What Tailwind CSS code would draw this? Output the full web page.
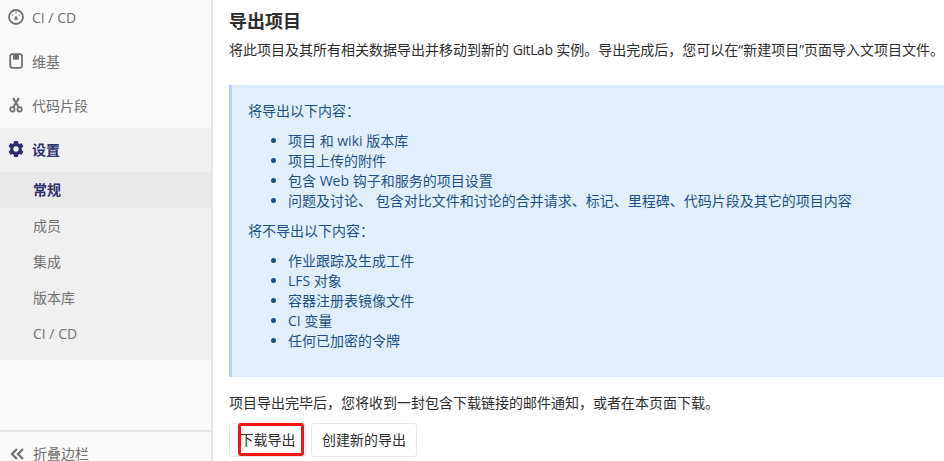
<!DOCTYPE html>
<html lang="zh">
<head>
<meta charset="UTF-8">
<title>导出项目</title>
<script src="https://cdn.jsdelivr.net/npm/@tailwindcss/browser@4"></script>
</head>
<body class="w-[944px] h-[461px] overflow-hidden bg-white flex font-['Open_Sans','Noto_Sans_CJK_SC',sans-serif] text-[14px]">

<!-- sidebar -->
<aside class="w-[213px] h-[461px] shrink-0 bg-[#fafafa] border-r-2 border-[#e5e5e5] flex flex-col text-[#707070]">
  <div class="h-[128px] flex flex-col">
    <a class="h-[36px] pb-[2px] flex items-center pl-[8px] gap-[8px]">
      <svg width="16" height="16" viewBox="0 0 16 16" fill="none" class="shrink-0"><circle cx="8" cy="8" r="7" stroke="#707070" stroke-width="1.800"/><path d="M8 6.500c1 1.300 1.600 2.100 1.600 3a1.600 1.600 0 0 1-3.200 0c0-.9.600-1.700 1.600-3z" fill="#707070"/><circle cx="8" cy="3.800" r=".8" fill="#707070"/><circle cx="4.600" cy="6" r=".8" fill="#707070"/><circle cx="11.400" cy="6" r=".8" fill="#707070"/></svg>
      <span>CI / CD</span>
    </a>
    <a class="h-[44px] pb-[2px] mt-[4px] flex items-center pl-[8px] gap-[8px]">
      <svg width="16" height="16" viewBox="0 0 16 16" fill="none" class="shrink-0"><rect x="2.200" y="1.200" width="11.800" height="13.600" rx="2.200" stroke="#707070" stroke-width="1.800"/><path d="M5 1.500h6v4.200a1 1 0 0 1-1 1H6a1 1 0 0 1-1-1z" fill="#707070"/></svg>
      <span>维基</span>
    </a>
    <a class="h-[44px] pb-[2px] flex items-center pl-[8px] gap-[8px]">
      <svg width="16" height="16" viewBox="0 0 16 16" fill="none" class="shrink-0"><path d="M5 1l5.600 9M11 1L5.400 10" stroke="#707070" stroke-width="2"/><circle cx="4.400" cy="12.400" r="2.200" stroke="#707070" stroke-width="1.700"/><circle cx="11.600" cy="12.400" r="2.200" stroke="#707070" stroke-width="1.700"/></svg>
      <span>代码片段</span>
    </a>
  </div>
  <div class="bg-[#f0f0f0] h-[232px] flex flex-col">
    <a class="h-[44px] pb-[2px] flex items-center pl-[8px] gap-[8px] font-semibold text-[#2e2e6e]">
      <svg width="16" height="16" viewBox="0 0 16 16" class="shrink-0"><path fill="#2e2e6e" fill-rule="evenodd" d="M6.200 0h3.600l.5 2.300 1.100.6 2.200-.7 1.800 3.100-1.700 1.600v2.200l1.700 1.600-1.800 3.100-2.200-.7-1.100.6-.5 2.300H6.200l-.5-2.300-1.100-.6-2.200.7-1.800-3.100 1.700-1.600V6.900L.6 5.300l1.800-3.100 2.200.7 1.100-.6zM8 5.300a2.700 2.700 0 1 0 0 5.400 2.700 2.700 0 0 0 0-5.400z"/></svg>
      <span>设置</span>
    </a>
    <a class="h-[36px] pb-[2px] flex items-center pl-[33px] bg-[#e9e9e9] font-semibold text-[#2e2e6e]">常规</a>
    <a class="h-[36px] pb-[2px] flex items-center pl-[33px]">成员</a>
    <a class="h-[36px] pb-[2px] flex items-center pl-[33px]">集成</a>
    <a class="h-[36px] pb-[2px] flex items-center pl-[33px]">版本库</a>
    <a class="h-[36px] pb-[2px] flex items-center pl-[33px]">CI / CD</a>
  </div>
  <div class="mt-[70px] border-t-2 border-[#e5e5e5] h-[31px] flex items-start pl-[10px] gap-[8px] pt-[15px]">
    <svg width="15" height="14" viewBox="0 0 15 14" fill="none" class="shrink-0"><path d="M7 2L2 7l5 5M13 2L8 7l5 5" stroke="#707070" stroke-width="2.200"/></svg>
    <span class="leading-[14px]">折叠边栏</span>
  </div>
</aside>

<!-- content -->
<main class="flex-1 pl-[16px] min-w-0 text-[#2e2e2e]">
  <h4 class="text-[18px] leading-[20px] font-bold mt-[11px]">导出项目</h4>
  <p class="mt-[9px] leading-[20px] whitespace-nowrap">将此项目及其所有相关数据导出并移动到新的 <span class="tracking-[-0.4px]">GitLab</span> 实例。导出完成后，您可以在“新建项目”页面导入文项目文件。</p>

  <div class="mt-[25px] h-[292px] bg-[#e1effc] border-l-[3px] border-[#b8d6f4] pl-[16px] pt-[16px] text-[#1f4f86]">
    <p class="leading-[20px]">将导出以下内容：</p>
    <ul class="list-disc mt-[10px] pl-[40px] leading-[20px]">
      <li>项目 和 wiki 版本库</li>
      <li>项目上传的附件</li>
      <li>包含 Web 钩子和服务的项目设置</li>
      <li>问题及讨论、 包含对比文件和讨论的合并请求、标记、里程碑、代码片段及其它的项目内容</li>
    </ul>
    <p class="mt-[10px] leading-[20px]">将不导出以下内容：</p>
    <ul class="list-disc mt-[10px] pl-[40px] leading-[20px]">
      <li>作业跟踪及生成工件</li>
      <li>LFS 对象</li>
      <li>容器注册表镜像文件</li>
      <li>CI 变量</li>
      <li>任何已加密的令牌</li>
    </ul>
  </div>

  <p class="mt-[16px] leading-[20px]">项目导出完毕后，您将收到一封包含下载链接的邮件通知，或者在本页面下载。</p>
  <div class="mt-[10px] flex gap-[5px]">
    <div class="relative">
      <button class="h-[34px] w-[77px] pb-[2px] border border-[#e5e5e5] rounded-[3px] bg-white flex items-center justify-center">下载导出</button>
      <div class="absolute left-[9px] top-0 w-[66px] h-[33px] border-[3px] border-[#f5140f] rounded-[3px]"></div>
    </div>
    <button class="h-[34px] w-[106px] pb-[2px] border border-[#e5e5e5] rounded-[3px] bg-white flex items-center justify-center">创建新的导出</button>
  </div>
</main>
</body>
</html>
